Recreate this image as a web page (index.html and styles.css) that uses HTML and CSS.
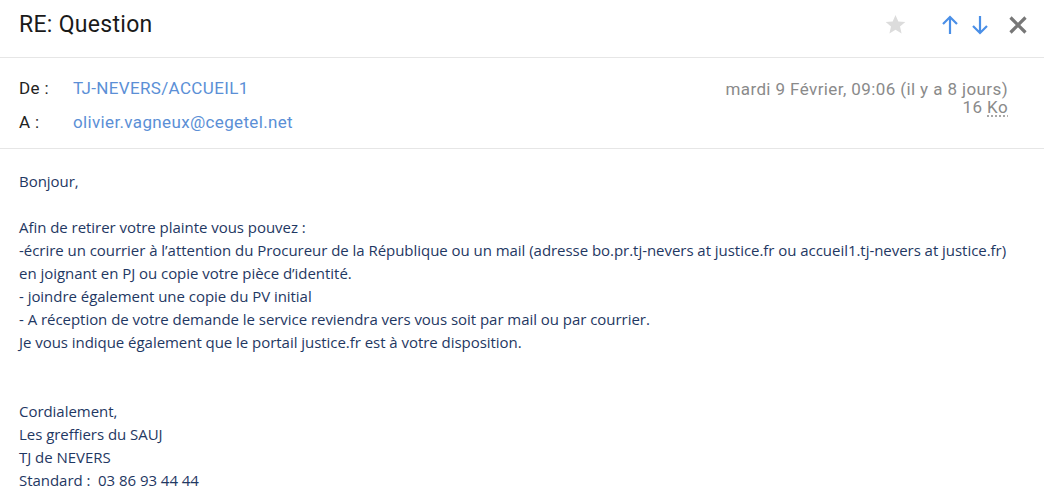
FILE: index.html
```html
<!DOCTYPE html>
<html lang="fr">
<head>
<meta charset="utf-8">
<title>RE: Question</title>
<link rel="stylesheet" href="styles.css">
</head>
<body>
<div class="msg">
  <header class="topbar">
    <h1 class="subject">RE: Question</h1>
    <div class="actions">
      <span class="icon star"><svg width="23" height="23" viewBox="0 0 24 24"><path d="M12 2l2.95 6.75 7.3.65-5.55 4.8 1.65 7.15L12 17.55 5.65 21.35l1.65-7.15L1.75 9.4l7.3-.65z" fill="#dcdcdc"/></svg></span>
      <span class="icon up"><svg width="20" height="22" viewBox="0 0 20 22"><path d="M10 3v17M3 10l7-7 7 7" fill="none" stroke="#4a8fe7" stroke-width="2.2"/></svg></span>
      <span class="icon down"><svg width="20" height="22" viewBox="0 0 20 22"><path d="M10 2v17M3 12l7 7 7-7" fill="none" stroke="#4a8fe7" stroke-width="2.2"/></svg></span>
      <span class="icon close"><svg width="20" height="20" viewBox="0 0 20 20"><path d="M2.5 2.5l15 15M17.5 2.5l-15 15" fill="none" stroke="#777" stroke-width="3.2"/></svg></span>
    </div>
  </header>
  <section class="headers">
    <div class="fields">
      <div class="field"><span class="label">De :</span><a class="value">TJ-NEVERS/ACCUEIL1</a></div>
      <div class="field"><span class="label">A :</span><a class="value">olivier.vagneux@cegetel.net</a></div>
    </div>
    <div class="meta">
      <div>mardi 9 Février, 09:06 (il y a 8 jours)</div>
      <div>16 <abbr class="unit">Ko</abbr></div>
    </div>
  </section>
  <article class="body">
    <p>Bonjour,</p>
    <p class="blank">&nbsp;</p>
    <p>Afin de retirer votre plainte vous pouvez :</p>
    <p>-écrire un courrier à l’attention du Procureur de la République ou un mail (adresse bo.pr.tj-nevers at justice.fr ou accueil1.tj-nevers at justice.fr)<br>en joignant en PJ ou copie votre pièce d’identité.</p>
    <p>- joindre également une copie du PV initial</p>
    <p>- A réception de votre demande le service reviendra vers vous soit par mail ou par courrier.</p>
    <p>Je vous indique également que le portail justice.fr est à votre disposition.</p>
    <p class="blank">&nbsp;</p>
    <p class="blank">&nbsp;</p>
    <p>Cordialement,</p>
    <p>Les greffiers du SAUJ</p>
    <p>TJ de NEVERS</p>
    <p>Standard :&nbsp; 03 86 93 44 44</p>
  </article>
</div>
</body>
</html>
```
FILE: styles.css
```css
html, body {
  margin: 0;
  padding: 0;
  background: #fff;
}
.msg {
  width: 1044px;
  font-family: "Roboto", "Liberation Sans", sans-serif;
}
.topbar {
  display: flex;
  align-items: center;
  justify-content: space-between;
  height: 58px;
  border-bottom: 1px solid #e6e6e6;
  padding: 0 16px 8px 19px;
  box-sizing: border-box;
}
.subject {
  margin: 0;
  font-size: 23px;
  font-weight: 400;
  color: #1a1a1a;
  letter-spacing: 0.3px;
}
.actions {
  display: flex;
  align-items: center;
}
.icon { display: flex; }
.star { margin-right: 33px; }
.up { margin-right: 10px; }
.down { margin-right: 18px; }
.headers {
  display: flex;
  justify-content: space-between;
  align-items: flex-start;
  padding: 20px 36px 0 19px;
  height: 91px;
  box-sizing: border-box;
  border-bottom: 1px solid #e6e6e6;
}
.fields { margin-top: -2px; }
.field {
  display: flex;
  font-size: 17px;
  line-height: 34px;
  height: 34px;
  letter-spacing: 0.35px;
}
.field:first-child { margin-top: -5px; }
.label {
  width: 54px;
  color: #222;
}
.value {
  color: #5b8fd6;
  text-decoration: none;
}
.meta {
  text-align: right;
  color: #8a8a8a;
  font-size: 17px;
  line-height: 18px;
  letter-spacing: 0.4px;
  margin-top: 2px;
}
.unit {
  text-decoration: underline dotted #999;
  text-underline-offset: 3px;
}
.body {
  padding: 21px 19px 0 19px;
  font-family: "Open Sans", "Liberation Sans", sans-serif;
  font-size: 15px;
  letter-spacing: -0.04px;
  line-height: 23px;
  color: #1f3863;
  white-space: nowrap;
}
.body p {
  margin: 0;
}
```
